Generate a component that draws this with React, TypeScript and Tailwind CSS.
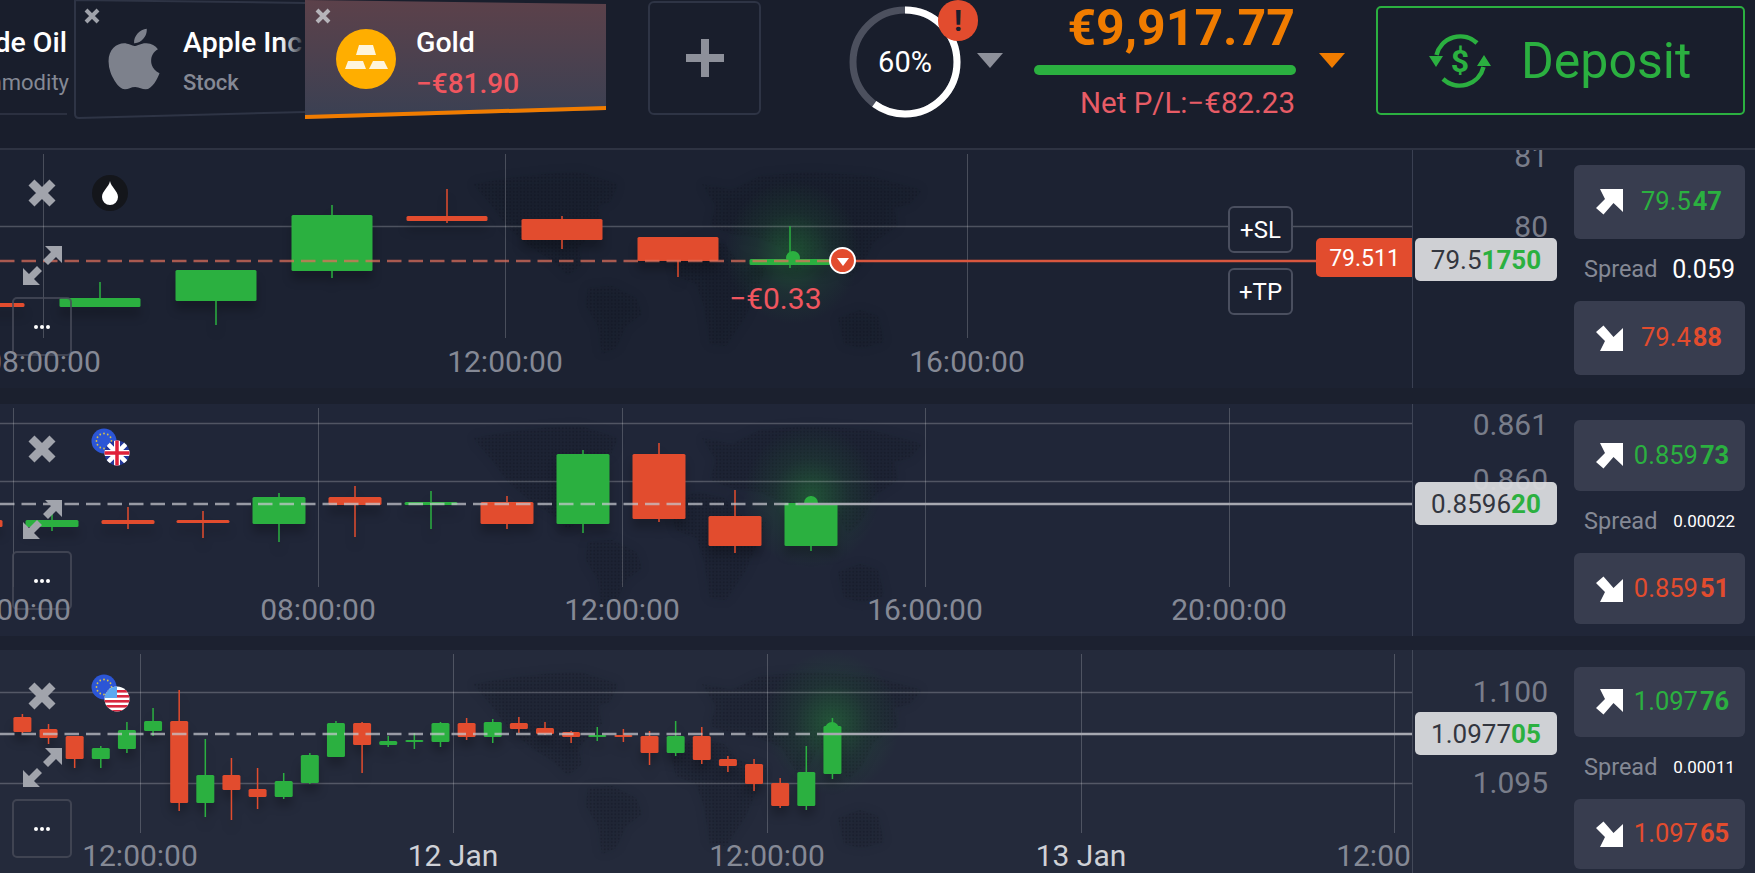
import type { ReactNode } from 'react';
import { FaApple } from 'react-icons/fa';

const GREEN = '#2bb040';
const RED = '#e24c2e';

// all candle numbers are page pixels: x centre, body top/bottom, wick top/bottom
type Candle = { up: boolean; x: number; t: number; b: number; wt: number; wb: number };

const c = (up: number, x: number, t: number, b: number, wt: number, wb: number): Candle => ({ up: up === 1, x, t, b, wt, wb });

const oilCandles = [
  c(0, -16, 303, 307, 303, 307),
  c(1, 100, 298, 307, 282, 307),
  c(1, 216, 270, 301, 270, 325),
  c(1, 332, 215, 271, 205, 278),
  c(0, 447, 216, 221, 189, 223),
  c(0, 562, 219, 240, 216, 249),
  c(0, 678, 237, 261, 237, 277),
  c(1, 790, 259, 265, 226, 268),
];

const gbpCandles = [
  c(0, -24, 520, 527, 520, 527),
  c(1, 52, 520, 527, 513, 531),
  c(0, 128, 520, 524, 507, 529),
  c(0, 203, 520, 523, 511, 538),
  c(1, 279, 497, 524, 493, 542),
  c(0, 355, 497, 505, 486, 537),
  c(1, 431, 502, 505, 491, 529),
  c(0, 507, 502, 524, 496, 529),
  c(1, 583, 454, 524, 450, 533),
  c(0, 659, 454, 519, 443, 522),
  c(0, 735, 516, 546, 490, 553),
  c(1, 811, 503, 546, 496, 551),
];

const usdRows: number[][] = [
  [0, 717, 732, 714, 733], [0, 729, 738, 724, 744], [0, 736, 759, 736, 768], [1, 748, 759, 746, 768],
  [1, 730, 749, 722, 753], [1, 721, 731, 708, 736], [0, 721, 803, 690, 811], [1, 775, 803, 739, 817],
  [0, 775, 790, 758, 820], [0, 789, 797, 768, 809], [1, 781, 797, 773, 799], [1, 755, 783, 753, 784],
  [1, 723, 757, 721, 757], [0, 723, 745, 722, 773], [1, 741, 745, 736, 747], [1, 740, 741, 733, 749],
  [1, 723, 742, 722, 747], [0, 723, 737, 718, 740], [1, 722, 737, 719, 743], [0, 723, 729, 717, 733],
  [0, 728, 734, 722, 735], [0, 732, 737, 731, 743], [1, 735, 736, 727, 741], [0, 735, 737, 729, 742],
  [0, 736, 753, 731, 765], [1, 736, 753, 721, 756], [0, 736, 760, 727, 764], [0, 759, 766, 756, 772],
  [0, 764, 784, 759, 791], [0, 783, 806, 778, 808], [1, 772, 806, 746, 810], [1, 726, 774, 718, 779],
];
const usdCandles = usdRows.map((r, i) => c(r[0], 22.4 + i * 26.13, r[1], r[2], r[3], r[4]));

const continents = [
  'M3 8 L40 2 L75 -2 L110 -4 L148 8 L140 26 L128 30 L132 48 L118 62 L108 72 L112 88 L98 100 L84 86 L62 72 L38 52 L22 30 Z',
  'M118 112 L142 110 L166 122 L172 138 L156 150 L146 172 L132 178 L128 150 L116 130 Z',
  'M200 74 L226 62 L254 68 L268 84 L296 92 L286 116 L276 140 L256 170 L240 168 L234 130 L226 108 L206 100 Z',
  'M232 8 L262 14 L290 0 L340 -4 L400 0 L452 14 L440 28 L424 32 L428 50 L404 66 L392 90 L378 104 L368 84 L350 70 L340 88 L326 96 L312 72 L290 62 L262 58 L240 50 L246 30 Z',
  'M368 142 L390 134 L408 140 L414 166 L392 172 L374 168 Z',
];

function WorldMap({ x, y, id }: { x: number; y: number; id: string }) {
  return (
    <g transform={`translate(${x} ${y})`}>
      <defs>
        <pattern id={id} width="3.5" height="3.5" patternUnits="userSpaceOnUse">
          <circle cx="1.75" cy="1.75" r="1.1" fill="#0a0e16" fillOpacity="0.24" />
        </pattern>
      </defs>
      <g fill="#0c101a" fillOpacity="0.12" className="[filter:blur(5px)]">
        {continents.map((d) => <path key={d} d={d} />)}
      </g>
      <g fill={`url(#${id})`} className="[filter:blur(0.5px)]">
        {continents.map((d) => <path key={d} d={d} />)}
      </g>
    </g>
  );
}

type ChartProps = {
  id: string;
  top: number;
  height: number;
  hLines: number[];
  vLines: number[];
  vEnd: number;
  candles: Candle[];
  bodyW: number;
  price: number;
  head: [number, number];
  lineColor: string;
  dashColor: string;
  dashEnd: number;
};

function ChartSvg({ id, top, height, hLines, vLines, vEnd, candles, bodyW, price, head, lineColor, dashColor, dashEnd }: ChartProps) {
  return (
    <svg className="absolute left-0 top-0" width="1413" height={height} viewBox={`0 ${top} 1413 ${height}`}>
      <defs>
        <radialGradient id={`${id}-glow`}>
          <stop offset="0%" stopColor={GREEN} stopOpacity="0.34" />
          <stop offset="55%" stopColor={GREEN} stopOpacity="0.1" />
          <stop offset="100%" stopColor={GREEN} stopOpacity="0" />
        </radialGradient>
      </defs>
      <WorldMap x={470} y={top + 26} id={`${id}-map`} />
      <ellipse cx={head[0]} cy={head[1] - 6} rx="68" ry="72" fill={`url(#${id}-glow)`} />
      {hLines.map((y) => (
        <line key={y} x1="0" x2="1413" y1={y + 0.5} y2={y + 0.5} stroke="#fff" strokeOpacity="0.22" strokeWidth="1.5" />
      ))}
      {vLines.map((x) => (
        <line key={x} x1={x + 0.5} x2={x + 0.5} y1={top + 4} y2={vEnd} stroke="#fff" strokeOpacity="0.2" />
      ))}
      <g className="[filter:drop-shadow(0_9px_5px_rgba(0,0,0,0.22))]">
        {candles.map((k) => (
          <g key={k.x} fill={k.up ? GREEN : RED}>
            <rect x={k.x - 0.75} y={k.wt} width="1.5" height={k.wb - k.wt} />
            <rect x={k.x - bodyW / 2} y={k.t} width={bodyW} height={Math.max(k.b - k.t, 2)} rx="1.5" />
          </g>
        ))}
      </g>
      <circle cx={head[0]} cy={head[1]} r="7" fill={GREEN} />
      <line x1="0" x2={dashEnd} y1={price} y2={price} stroke={dashColor} strokeOpacity="0.72" strokeWidth="2.5" strokeDasharray="14.5 7" />
      <line x1={dashEnd} x2="1413" y1={price} y2={price} stroke={lineColor} strokeWidth="2.5" />
    </svg>
  );
}

function CloseIcon() {
  return (
    <svg width="30" height="30" viewBox="0 0 30 30" className="shrink-0">
      <path d="M7.5 7.5 L22.5 22.5 M22.5 7.5 L7.5 22.5" stroke="#a1a4ac" strokeWidth="8.5" strokeLinecap="square" />
    </svg>
  );
}

function ExpandIcon() {
  return (
    <svg width="39" height="39" viewBox="0 0 39 39" fill="#a1a4ac" className="shrink-0 mt-auto">
      <path d="M22 0 H39 V17 L33 11 L25 19 L20 14 L28 6 Z" />
      <path d="M17 39 H0 V22 L6 28 L14 20 L19 25 L11 33 Z" />
    </svg>
  );
}

function MoreButton() {
  return (
    <div className="mt-[12px] w-[60px] h-[59px] shrink-0 rounded-[5px] border-2 border-[#474b59]/80 flex items-center justify-center gap-[2px]">
      <span className="w-[4px] h-[4px] rounded-full bg-white" />
      <span className="w-[4px] h-[4px] rounded-full bg-white" />
      <span className="w-[4px] h-[4px] rounded-full bg-white" />
    </div>
  );
}

// the X / expand / more column at the left edge of each chart
function Controls({ pad }: { pad: string }) {
  return (
    <div className={`absolute inset-y-0 left-[12px] w-[60px] flex flex-col items-center ${pad}`}>
      <CloseIcon />
      <ExpandIcon />
      <MoreButton />
    </div>
  );
}

function TimeLabel({ x, y, text, bright }: { x: number; y: number; text: string; bright?: boolean }) {
  return (
    <span
      className={`absolute -translate-x-1/2 -translate-y-1/2 text-[30px] leading-none whitespace-nowrap ${bright ? 'text-[#cfd1d6]' : 'text-[#858995]'}`}
      style={{ left: x, top: y }}
    >
      {text}
    </span>
  );
}

function AxisLabel({ y, text }: { y: number; text: string }) {
  return (
    <span className="absolute right-[26px] -translate-y-1/2 text-[30px] leading-none text-[#797d8a]" style={{ top: y }}>
      {text}
    </span>
  );
}

function ArrowIcon({ down }: { down?: boolean }) {
  return (
    <svg width="27" height="26" viewBox="0 0 27 26" fill="#fff" className={`shrink-0 ${down ? '-scale-y-100' : ''}`}>
      <path d="M4 0 H27 V23 L17.5 14 L7.5 25.5 L0 19 L9 10 Z" />
    </svg>
  );
}

function TradeButton({ down, base, tail, h }: { down?: boolean; base: string; tail: string; h: string }) {
  return (
    <div className={`${h} rounded-[6px] bg-[#383d4f] flex items-center pl-[22px] pr-[5px]`}>
      <ArrowIcon down={down} />
      <span className={`flex-1 text-center text-[25.5px] leading-none ${down ? 'text-[#e24c2e]' : 'text-[#2bb040]'}`}>
        {base}
        <span className="font-bold ml-[2px]">{tail}</span>
      </span>
    </div>
  );
}

function SidePanel({ up, down, spread, small, pt, h }: { up: [string, string]; down: [string, string]; spread: string; small?: boolean; pt: string; h: string }) {
  return (
    <div className={`w-[181px] pr-[10px] ${pt}`}>
      <TradeButton base={up[0]} tail={up[1]} h={h} />
      <div className="h-[62px] flex items-center pl-[10px] justify-between pr-[10px]">
        <span className="text-[23.5px] text-[#858995]">Spread</span>
        <span className={`${small ? 'text-[17px]' : 'text-[25px]'} text-white`}>{spread}</span>
      </div>
      <TradeButton down base={down[0]} tail={down[1]} h={h} />
    </div>
  );
}

function PriceTag({ base, tail, top }: { base: string; tail: string; top: string }) {
  return (
    <div className={`absolute left-[2px] ${top} w-[142px] h-[43px] rounded-[5px] bg-[#d9dadd]/95 flex items-center justify-center text-[26px] leading-none text-[#33363f]`}>
      {base}
      <span className="font-bold text-[#2bb040]">{tail}</span>
    </div>
  );
}

function EuFlag({ cx, cy }: { cx: number; cy: number }) {
  const stars = Array.from({ length: 12 }, (_, i) => (i * Math.PI) / 6);
  return (
    <g>
      <circle cx={cx} cy={cy} r="12.5" fill="#2c56d6" />
      {stars.map((a) => (
        <circle key={a} cx={cx + Math.cos(a) * 7.5} cy={cy + Math.sin(a) * 7.5} r="0.9" fill="#d8c24a" />
      ))}
    </g>
  );
}

function PairFlags({ kind }: { kind: 'uk' | 'us' }) {
  return (
    <svg className="absolute left-[88px] top-[22px]" width="44" height="44" viewBox="88 22 44 44">
      <defs>
        <clipPath id={`${kind}-clip`}>
          <circle cx="117" cy="49" r="12.5" />
        </clipPath>
      </defs>
      <EuFlag cx={104} cy={37} />
      <g clipPath={`url(#${kind}-clip)`}>
        {kind === 'uk' ? (
          <>
            <rect x="104" y="36" width="26" height="26" fill="#24399b" />
            <path d="M104 36 L130 62 M130 36 L104 62" stroke="#fff" strokeWidth="4.5" />
            <path d="M117 36 V62 M104 49 H130" stroke="#fff" strokeWidth="6" />
            <path d="M117 36 V62 M104 49 H130" stroke="#e0213a" strokeWidth="3.5" />
          </>
        ) : (
          <>
            <rect x="104" y="36" width="26" height="26" fill="#fff" />
            {[40, 45, 50, 55, 60].map((y) => (
              <rect key={y} x="104" y={y} width="26" height="2.6" fill="#d8283f" />
            ))}
            <rect x="104" y="36" width="13" height="12" fill="#5ba8f0" />
          </>
        )}
      </g>
    </svg>
  );
}

function RingMeter() {
  return (
    <div className="relative w-[112px] h-[112px] mt-[6px] ml-[88px] flex items-center justify-center">
      <svg className="absolute inset-0 -rotate-90" width="112" height="112">
        <circle cx="56" cy="56" r="52" fill="none" stroke="#4c505e" strokeWidth="7" />
        <circle cx="56" cy="56" r="52" fill="none" stroke="#fff" strokeWidth="7" strokeDasharray="196 327" />
      </svg>
      <span className="text-[29px] text-white leading-none">60%</span>
      <div className="absolute left-[89px] top-[-6px] w-[40px] h-[41px] rounded-full bg-[#e24c2e] flex items-center justify-center text-[30px] font-bold text-[#1a1f2d] leading-none">
        !
      </div>
    </div>
  );
}

function DepositIcon() {
  return (
    <svg width="62" height="54" viewBox="0 0 62 54" fill="none" stroke="#2bb040" strokeWidth="4.5" className="shrink-0">
      <path d="M7.5 21 A24.5 24.5 0 0 1 48 9" />
      <path d="M54.5 33 A24.5 24.5 0 0 1 14 45" />
      <path d="M0 22 H14 L7 33 Z M48 32 H62 L55 21 Z" fill="#2bb040" stroke="none" />
      <text x="31" y="38" textAnchor="middle" fontSize="32" fontWeight="700" fill="#2bb040" stroke="none" fontFamily="Roboto, sans-serif">$</text>
    </svg>
  );
}

function TabClose({ color }: { color: string }) {
  return (
    <svg className="absolute left-[10px] top-[8px]" width="16" height="16" viewBox="0 0 16 16">
      <path d="M2 2 L14 14 M14 2 L2 14" stroke={color} strokeWidth="4" />
    </svg>
  );
}

function TabText({ title, children, gap }: { title: string; children: ReactNode; gap: string }) {
  return (
    <div className={`flex flex-col ${gap} pt-[26px] whitespace-nowrap`}>
      <div className="text-[28.5px] font-medium text-white leading-[34px]">{title}</div>
      {children}
    </div>
  );
}

function Header() {
  return (
    <header className="h-[150px] border-b-2 border-[#2e3342] flex items-start overflow-hidden">
      <div className="relative w-[74px] h-[116px] overflow-hidden flex justify-end pr-[7px]">
        <div className="shrink-0 flex flex-col items-end gap-[9px] pt-[26px] whitespace-nowrap">
          <div className="text-[28.5px] font-medium text-white leading-[34px]">Crude Oil</div>
          <div className="text-[22px] text-[#858995] leading-[28px] -mr-[2px]">Commodity</div>
        </div>
        <div className="absolute left-0 right-[7px] bottom-[1px] h-[2px] bg-[#2b3040]" />
      </div>

      <div className="relative w-[231px] h-[120px] overflow-hidden shrink-0 flex items-start pl-[34px] gap-[23px]">
        <svg className="absolute inset-0" width="231" height="120" fill="none">
          <path d="M1 -2 V114 Q1 118 5 118 L231 112 M1 0 L231 3" stroke="#2e3445" strokeWidth="2" />
        </svg>
        <TabClose color="#9fa2aa" />
        <FaApple className="mt-[24px] shrink-0 w-[52px] h-[70px] text-[#7d818c]" />
        <TabText title="Apple Inc" gap="gap-[9px]">
          <div className="text-[22px] font-medium text-[#858995] leading-[28px]">Stock</div>
        </TabText>
        <div className="absolute right-0 top-[20px] w-[24px] h-[50px] bg-gradient-to-r from-transparent to-[#191e2c]" />
      </div>

      <div className="relative w-[301px] h-[120px] shrink-0 flex items-start pl-[31px] gap-[20px] bg-gradient-to-b from-[#5c414a] to-[#394053] [clip-path:polygon(0_0,100%_4px,100%_110px,0_119px)]">
        <div className="absolute inset-x-0 bottom-0 h-[15px] bg-[#f07c00] [clip-path:polygon(0_10px,100%_1px,100%_6px,0_15px)]" />
        <TabClose color="#b6b4ba" />
        <svg className="mt-[29px] shrink-0" width="60" height="60" viewBox="0 0 60 60">
          <circle cx="30" cy="30" r="30" fill="#ffae00" />
          <path d="M23 16 H37 L40 26 H20 Z M12 32 H27 L30 40 H9 Z M37 32 H48 L52 40 H33 Z" fill="#fff5dc" />
        </svg>
        <TabText title="Gold" gap="gap-[8px]">
          <div className="text-[28px] font-medium text-[#f0565f] leading-[32px]">−€81.90</div>
        </TabText>
      </div>

      <div className="ml-[42px] mt-px w-[113px] h-[114px] rounded-[6px] border-2 border-[#2e3445] flex items-center justify-center shrink-0">
        <svg width="38" height="38" viewBox="0 0 38 38" fill="#8d909a">
          <path d="M15 0 H23 V15 H38 V23 H23 V38 H15 V23 H0 V15 H15 Z" />
        </svg>
      </div>

      <RingMeter />
      <div className="ml-[16px] mt-[53px] w-0 h-0 border-x-[13px] border-x-transparent border-t-[15px] border-t-[#8d909a]" />

      <div className="ml-[31px] w-[262px] flex flex-col items-end">
        <div className="h-[56px] text-[50px] font-bold leading-[56px] text-[#f07c00] pr-[1px]">€9,917.77</div>
        <div className="mt-[9px] w-full h-[10px] rounded-full bg-[#2bb040]" />
        <div className="mt-[14px] text-[29.5px] leading-[28px] text-[#e85c66] pr-[1px] whitespace-nowrap">Net P/L:−€82.23</div>
      </div>
      <div className="ml-[23px] mt-[53px] w-0 h-0 border-x-[13px] border-x-transparent border-t-[15px] border-t-[#f07c00]" />

      <div className="ml-[31px] mt-[6px] w-[369px] h-[109px] rounded-[5px] border-2 border-[#2bb040] flex items-center pl-[51px] gap-[30px]">
        <DepositIcon />
        <span className="text-[50px] leading-none text-[#2bb040]">Deposit</span>
      </div>
    </header>
  );
}

function DropIcon() {
  return (
    <div className="absolute left-[92px] top-[25px] w-[36px] h-[36px] rounded-full bg-[#14161b] flex items-center justify-center">
      <svg width="18" height="24" viewBox="0 0 18 24" fill="#fff">
        <path d="M9 0 C10 6 17 10 17 16 A8 8 0 0 1 1 16 C1 10 8 6 9 0 Z" />
      </svg>
    </div>
  );
}

function StopButton({ label }: { label: string }) {
  return (
    <div className="w-[65px] h-[47px] rounded-[6px] border-2 border-[#4a4f5f] bg-[#1c2232] flex items-center justify-center text-[24px] leading-none text-white">
      {label}
    </div>
  );
}

export default function App() {
  return (
    <div className="w-[1755px] h-[873px] overflow-hidden bg-[#191e2c] [font-family:Roboto,sans-serif]">
      <Header />

      {/* crude oil */}
      <section className="h-[238px] flex bg-[#1c2232] overflow-hidden">
        <div className="relative w-[1413px] overflow-hidden border-r border-r-[#3a4052]">
          <ChartSvg id="oil" top={150} height={238} hLines={[226]} vLines={[43, 505, 967]} vEnd={338} candles={oilCandles} bodyW={81} price={261} head={[793, 258]} lineColor="#d9573f" dashColor="#e0705c" dashEnd={830} />
          <Controls pad="pt-[28px] pb-[32px]" />
          <DropIcon />
          <TimeLabel x={43} y={212} text="08:00:00" />
          <TimeLabel x={505} y={212} text="12:00:00" />
          <TimeLabel x={967} y={212} text="16:00:00" />
          <span className="absolute left-[729px] top-[135px] text-[30px] leading-[28px] text-[#f0565f]">−€0.33</span>
          <div className="absolute left-[829px] top-[97px] w-[27px] h-[27px] rounded-full bg-[#e24c2e] border-2 border-white flex items-center justify-center">
            <div className="mt-[3px] w-0 h-0 border-x-[6px] border-x-transparent border-t-[8px] border-t-white" />
          </div>
          <div className="absolute left-[1228px] top-[56px] flex flex-col gap-[15px]">
            <StopButton label="+SL" />
            <StopButton label="+TP" />
          </div>
          <div className="absolute left-[1316px] top-[88px] w-[97px] h-[39px] pt-[2px] rounded-l-[5px] bg-[#e24c2e] flex items-center justify-center text-[23px] leading-none text-white">79.511</div>
        </div>
        <div className="relative w-[161px]">
          <AxisLabel y={7} text="81" />
          <AxisLabel y={77} text="80" />
          <PriceTag base="79.5" tail="1750" top="top-[88px]" />
        </div>
        <SidePanel up={['79.5', '47']} down={['79.4', '88']} spread="0.059" pt="pt-[15px]" h="h-[74px]" />
      </section>

      <div className="h-[16px] bg-[#1b202e]" />

      {/* EUR/GBP */}
      <section className="h-[232px] flex bg-[#202638] overflow-hidden">
        <div className="relative w-[1413px] overflow-hidden border-r border-r-[#3f4557]">
          <ChartSvg id="gbp" top={404} height={232} hLines={[423, 481]} vLines={[13, 318, 622, 925, 1229]} vEnd={587} candles={gbpCandles} bodyW={53} price={504} head={[811, 503]} lineColor="#a6a8b0" dashColor="#c6c8ce" dashEnd={798} />
          <Controls pad="pt-[30px] pb-[26px]" />
          <PairFlags kind="uk" />
          <TimeLabel x={13} y={206} text="04:00:00" />
          <TimeLabel x={318} y={206} text="08:00:00" />
          <TimeLabel x={622} y={206} text="12:00:00" />
          <TimeLabel x={925} y={206} text="16:00:00" />
          <TimeLabel x={1229} y={206} text="20:00:00" />
        </div>
        <div className="relative w-[161px]">
          <AxisLabel y={21} text="0.861" />
          <AxisLabel y={76} text="0.860" />
          <PriceTag base="0.8596" tail="20" top="top-[78px]" />
        </div>
        <SidePanel up={['0.859', '73']} down={['0.859', '51']} spread="0.00022" small pt="pt-[16px]" h="h-[71px]" />
      </section>

      <div className="h-[14px] bg-[#1c2130]" />

      {/* EUR/USD */}
      <section className="h-[223px] flex bg-[#242a3b] overflow-hidden">
        <div className="relative w-[1413px] overflow-hidden border-r border-r-[#434959]">
          <ChartSvg id="usd" top={650} height={223} hLines={[692, 783]} vLines={[140, 453, 767, 1081, 1394]} vEnd={833} candles={usdCandles} bodyW={18} price={734} head={[832, 729]} lineColor="#a6a8b0" dashColor="#c6c8ce" dashEnd={822} />
          <Controls pad="pt-[31px] pb-[15px]" />
          <PairFlags kind="us" />
          <TimeLabel x={140} y={206} text="12:00:00" />
          <TimeLabel x={453} y={206} text="12 Jan" bright />
          <TimeLabel x={767} y={206} text="12:00:00" />
          <TimeLabel x={1081} y={206} text="13 Jan" bright />
          <TimeLabel x={1394} y={206} text="12:00:00" />
        </div>
        <div className="relative w-[161px]">
          <AxisLabel y={42} text="1.100" />
          <AxisLabel y={133} text="1.095" />
          <PriceTag base="1.0977" tail="05" top="top-[62px]" />
        </div>
        <SidePanel up={['1.097', '76']} down={['1.097', '65']} spread="0.00011" small pt="pt-[17px]" h="h-[70px]" />
      </section>
    </div>
  );
}
